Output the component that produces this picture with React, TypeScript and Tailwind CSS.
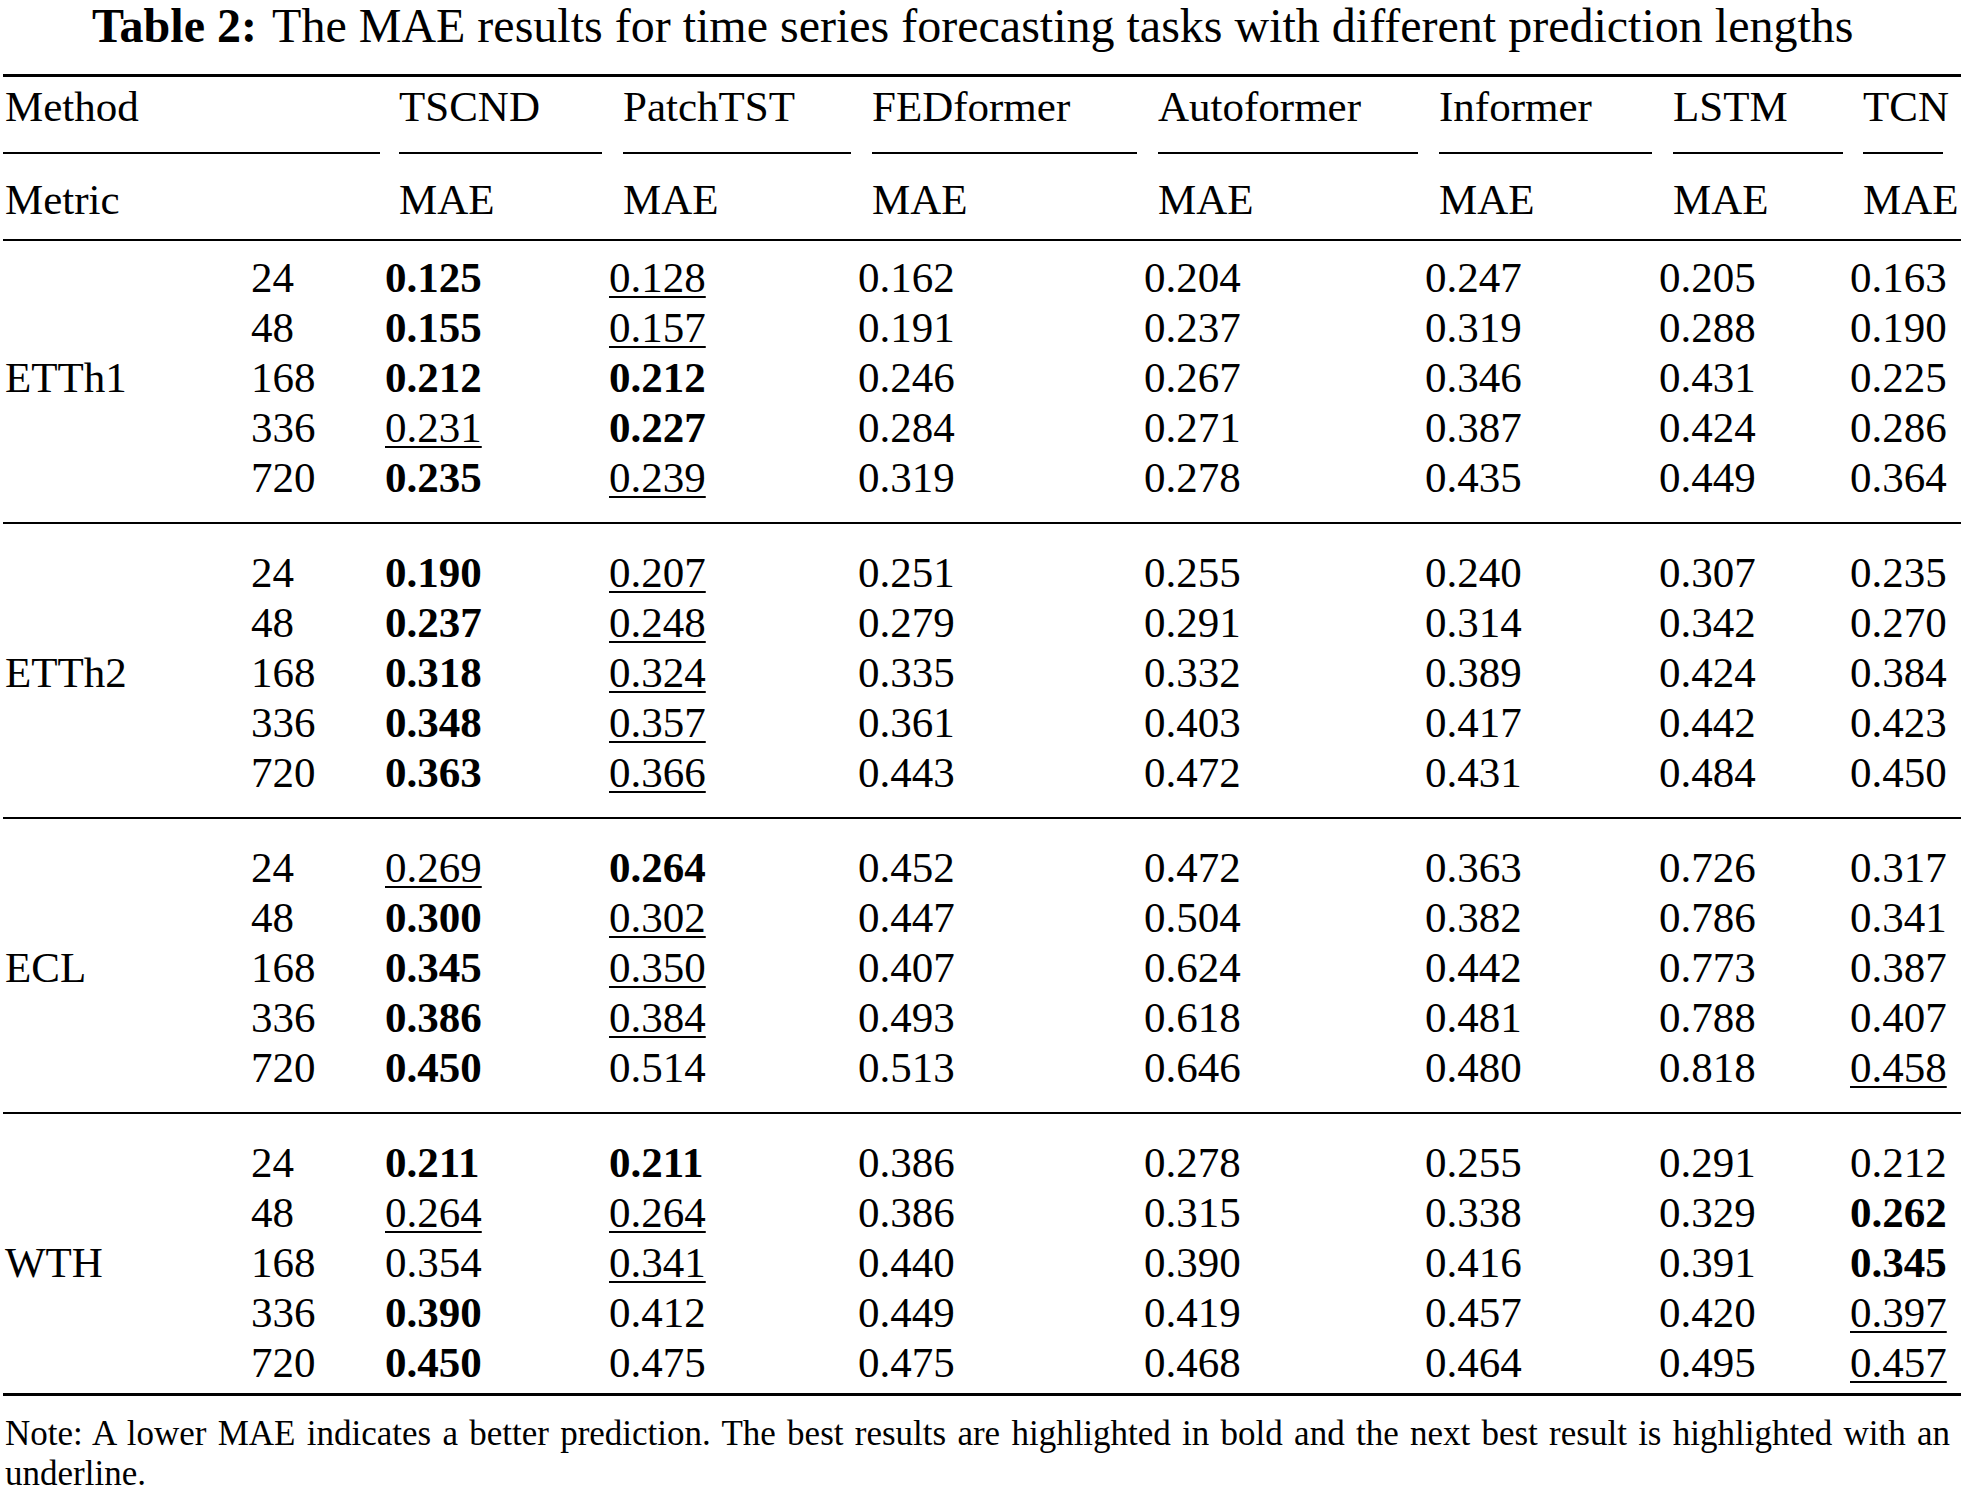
const methods = ['TSCND', 'PatchTST', 'FEDformer', 'Autoformer', 'Informer', 'LSTM', 'TCN']
const lengths = ['24', '48', '168', '336', '720']

// "*" = best (bold), "_" = second best (underline)
const groups: { name: string; rows: string[][] }[] = [
  {
    name: 'ETTh1',
    rows: [
      ['*0.125', '_0.128', '0.162', '0.204', '0.247', '0.205', '0.163'],
      ['*0.155', '_0.157', '0.191', '0.237', '0.319', '0.288', '0.190'],
      ['*0.212', '*0.212', '0.246', '0.267', '0.346', '0.431', '0.225'],
      ['_0.231', '*0.227', '0.284', '0.271', '0.387', '0.424', '0.286'],
      ['*0.235', '_0.239', '0.319', '0.278', '0.435', '0.449', '0.364'],
    ],
  },
  {
    name: 'ETTh2',
    rows: [
      ['*0.190', '_0.207', '0.251', '0.255', '0.240', '0.307', '0.235'],
      ['*0.237', '_0.248', '0.279', '0.291', '0.314', '0.342', '0.270'],
      ['*0.318', '_0.324', '0.335', '0.332', '0.389', '0.424', '0.384'],
      ['*0.348', '_0.357', '0.361', '0.403', '0.417', '0.442', '0.423'],
      ['*0.363', '_0.366', '0.443', '0.472', '0.431', '0.484', '0.450'],
    ],
  },
  {
    name: 'ECL',
    rows: [
      ['_0.269', '*0.264', '0.452', '0.472', '0.363', '0.726', '0.317'],
      ['*0.300', '_0.302', '0.447', '0.504', '0.382', '0.786', '0.341'],
      ['*0.345', '_0.350', '0.407', '0.624', '0.442', '0.773', '0.387'],
      ['*0.386', '_0.384', '0.493', '0.618', '0.481', '0.788', '0.407'],
      ['*0.450', '0.514', '0.513', '0.646', '0.480', '0.818', '_0.458'],
    ],
  },
  {
    name: 'WTH',
    rows: [
      ['*0.211', '*0.211', '0.386', '0.278', '0.255', '0.291', '0.212'],
      ['_0.264', '_0.264', '0.386', '0.315', '0.338', '0.329', '*0.262'],
      ['0.354', '_0.341', '0.440', '0.390', '0.416', '0.391', '*0.345'],
      ['*0.390', '0.412', '0.449', '0.419', '0.457', '0.420', '_0.397'],
      ['*0.450', '0.475', '0.475', '0.468', '0.464', '0.495', '_0.457'],
    ],
  },
]

const gridCols = 'grid grid-cols-[247px_133px_224px_249px_286px_281px_234px_191px_113px]'

function Val({ v }: { v: string }) {
  if (v.startsWith('*')) return <span className="font-bold">{v.slice(1)}</span>
  if (v.startsWith('_'))
    return <span className="underline decoration-2 underline-offset-4">{v.slice(1)}</span>
  return <span>{v}</span>
}

export default function App() {
  return (
    <div
      className="w-[1971px] h-[1492px] bg-white text-black overflow-hidden pt-[2px]"
      style={{ fontFamily: '"Liberation Serif", "Times New Roman", serif' }}
    >
      {/* Caption */}
      <h1 className="pl-[92px] text-[48px] leading-[48px] font-normal whitespace-nowrap">
        <span className="font-bold mr-[4px]">Table 2:</span> The MAE results for time series forecasting tasks with
        different prediction lengths
      </h1>

      <div className="ml-[3px] w-[1958px] mt-[24px]">
        {/* Top rule */}
        <div className="h-[3px] bg-black" />

        {/* Header */}
        <div className={`${gridCols} text-[43px] leading-[50px] pt-[5px]`}>
          <div className="col-span-2 pr-[3px]">
            <div className="pl-[2px]">Method</div>
            <div className="mt-[20px] h-[2px] bg-black" />
          </div>
          {methods.map((m, i) => (
            <div key={m} className={i === methods.length - 1 ? 'pl-[15px] pr-[18px]' : 'pl-[16px] pr-[5px]'}>
              <div className="whitespace-nowrap">{m}</div>
              <div className="mt-[20px] h-[2px] bg-black" />
            </div>
          ))}
          <div className="col-span-2 pl-[2px] mt-[21px]">Metric</div>
          {methods.map((m, i) => (
            <div key={m} className={`mt-[21px] ${i === methods.length - 1 ? 'pl-[15px]' : 'pl-[16px]'}`}>
              MAE
            </div>
          ))}
        </div>

        {/* Mid rule */}
        <div className="mt-[14px] h-[2px] bg-black" />

        {/* Body */}
        {groups.map((g, gi) => (
          <div key={g.name}>
            <div
              className={`${gridCols} text-[43px] leading-[50px] ${gi === 0 ? 'pt-[12px]' : 'pt-[24px]'} ${
                gi === groups.length - 1 ? 'pb-[5px]' : 'pb-[19px]'
              }`}
            >
              {g.rows.map((row, ri) => (
                <div key={ri} className="contents">
                  <div className="pl-[2px]">{ri === 2 ? g.name : ''}</div>
                  <div className="pl-[1px]">{lengths[ri]}</div>
                  {row.map((v, ci) => (
                    <div key={ci} className="pl-[2px] whitespace-nowrap">
                      <Val v={v} />
                    </div>
                  ))}
                </div>
              ))}
            </div>
            <div className={gi === groups.length - 1 ? 'h-[3px] bg-black' : 'h-[2px] bg-black'} />
          </div>
        ))}

        {/* Note */}
        <p className="mt-[18px] pl-[2px] pr-[11px] text-[35px] leading-[40px] text-justify">
          Note: A lower MAE indicates a better prediction. The best results are highlighted in bold and the next best
          result is highlighted with an underline.
        </p>
      </div>
    </div>
  )
}
